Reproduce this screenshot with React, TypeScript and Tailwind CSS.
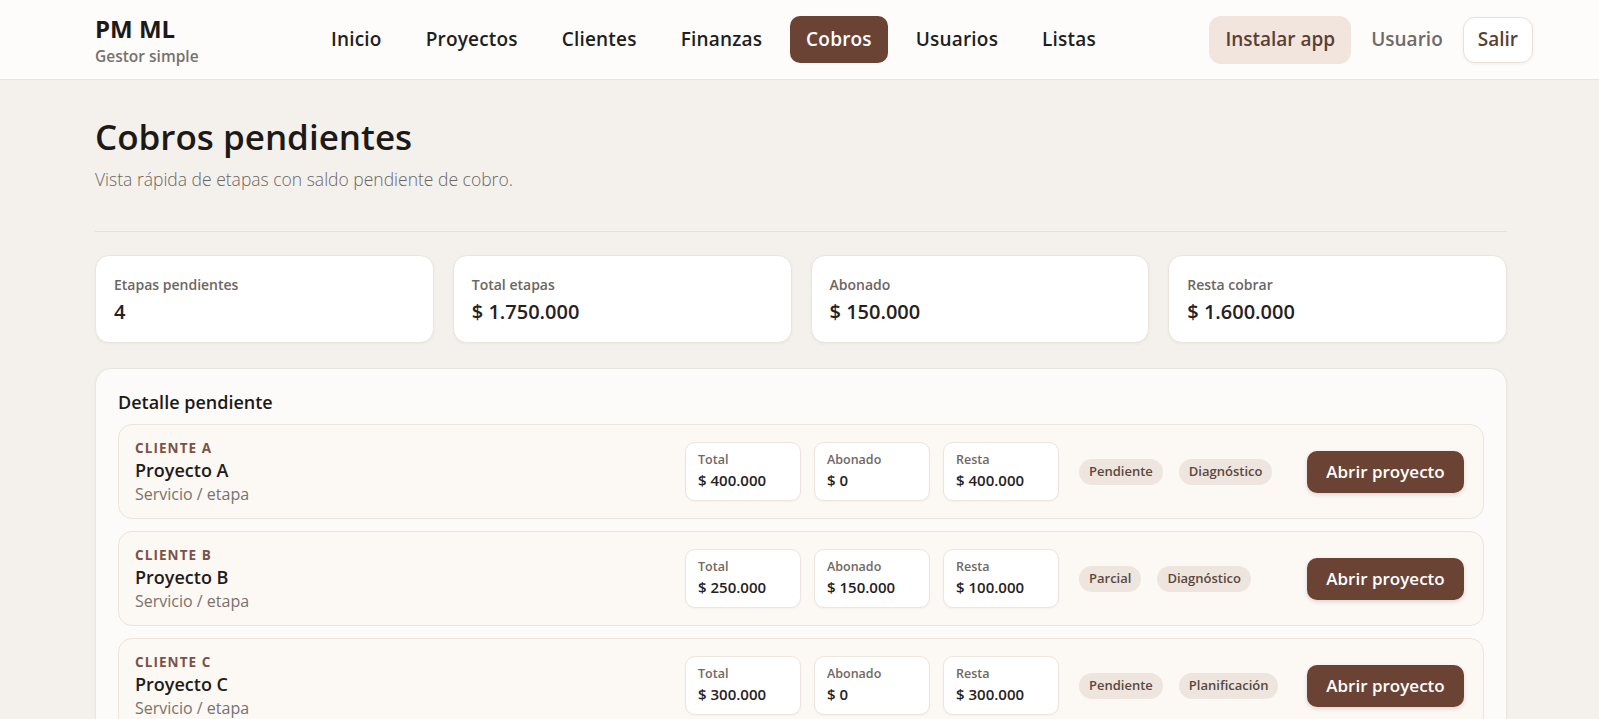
import React from 'react';

interface Stat {
  label: string;
  value: string;
}

interface Pending {
  client: string;
  project: string;
  total: string;
  paid: string;
  rest: string;
  status: string;
  stage: string;
}

const NAV_ITEMS = ['Inicio', 'Proyectos', 'Clientes', 'Finanzas', 'Cobros', 'Usuarios', 'Listas'];

const STATS: Stat[] = [
  { label: 'Etapas pendientes', value: '4' },
  { label: 'Total etapas', value: '$ 1.750.000' },
  { label: 'Abonado', value: '$ 150.000' },
  { label: 'Resta cobrar', value: '$ 1.600.000' },
];

const PENDING: Pending[] = [
  { client: 'Cliente A', project: 'Proyecto A', total: '$ 400.000', paid: '$ 0', rest: '$ 400.000', status: 'Pendiente', stage: 'Diagnóstico' },
  { client: 'Cliente B', project: 'Proyecto B', total: '$ 250.000', paid: '$ 150.000', rest: '$ 100.000', status: 'Parcial', stage: 'Diagnóstico' },
  { client: 'Cliente C', project: 'Proyecto C', total: '$ 300.000', paid: '$ 0', rest: '$ 300.000', status: 'Pendiente', stage: 'Planificación' },
];

function Amount({ label, value }: { label: string; value: string }) {
  return (
    <div className="w-[116px] h-[59px] rounded-[10px] border border-[#ece5df] bg-white px-3 pt-[8px] shadow-[0_1px_2px_rgba(60,40,30,0.04)]">
      <div className="text-[12.5px] font-semibold text-[#6f6863] leading-[18px]">{label}</div>
      <div className="text-[15px] font-semibold text-[#26211e] leading-[22px]">{value}</div>
    </div>
  );
}

function Badge({ text }: { text: string }) {
  return (
    <span className="inline-flex h-[26px] items-center rounded-full bg-[#eee5de] px-[10px] text-[13px] font-semibold text-[#5a4840]">
      {text}
    </span>
  );
}

function PendingRow({ item }: { item: Pending }) {
  return (
    <div className="flex h-[95px] items-center rounded-[14px] border border-[#ede4dc] bg-[#fcf8f4] pl-[16px] pr-[19px]">
      <div className="flex-1">
        <div className="text-[13.5px] font-bold uppercase tracking-[0.08em] text-[#7a5246] leading-[18px]">{item.client}</div>
        <div className="text-[18px] font-semibold text-[#1f1b18] leading-[26px]">{item.project}</div>
        <div className="text-[16px] text-[#79726d] leading-[22px]">Servicio / etapa</div>
      </div>
      <div className="flex gap-[13px]">
        <Amount label="Total" value={item.total} />
        <Amount label="Abonado" value={item.paid} />
        <Amount label="Resta" value={item.rest} />
      </div>
      <div className="flex w-[248px] items-center gap-4 pl-5">
        <Badge text={item.status} />
        <Badge text={item.stage} />
      </div>
      <button className="h-[42px] w-[157px] rounded-[10px] bg-[#6b4334] text-[17px] font-semibold text-white shadow-[0_2px_4px_rgba(60,30,20,0.15)]">
        Abrir proyecto
      </button>
    </div>
  );
}

export default function App() {
  return (
    <div className="min-h-screen bg-[#f4f1ed] text-[#1f1b18]" style={{ fontFamily: '"Open Sans", "Noto Sans", sans-serif' }}>
      {/* Header */}
      <header className="flex h-[80px] items-center border-b border-[#e9e4df] bg-[#fdfcfb] pl-[95px] pr-[66px]">
        <div className="w-[220px]">
          <div className="text-[24px] font-bold leading-[30px] text-[#1c1917]">PM ML</div>
          <div className="mt-[2px] text-[15.5px] font-semibold leading-[20px] text-[#77716c]">Gestor simple</div>
        </div>
        <nav className="flex items-center gap-3">
          {NAV_ITEMS.map((item) =>
            item === 'Cobros' ? (
              <span key={item} className="flex h-[47px] items-center rounded-[10px] bg-[#6b4334] px-4 text-[19px] font-semibold tracking-[0.01em] text-white">
                {item}
              </span>
            ) : (
              <span key={item} className="flex h-[47px] items-center px-4 text-[19px] font-semibold tracking-[0.01em] text-[#221e1b]">
                {item}
              </span>
            )
          )}
        </nav>
        <div className="ml-auto flex items-center gap-5">
          <button className="h-[48px] rounded-[12px] bg-[#f1e5dd] px-4 text-[19px] font-semibold text-[#5a3f35]">
            Instalar app
          </button>
          <span className="text-[19px] font-semibold text-[#6f6a66]">Usuario</span>
          <button className="h-[46px] rounded-[12px] border border-[#e8e1db] bg-white px-[14px] text-[19px] font-semibold text-[#5a3f35] shadow-[0_1px_3px_rgba(60,40,30,0.06)]">
            Salir
          </button>
        </div>
      </header>

      <main className="pl-[95px] pr-[92px]">
        {/* Title */}
        <div className="pt-[35px]">
          <h1 className="text-[35px] font-semibold leading-[44px] text-[#1c1917]">Cobros pendientes</h1>
          <p className="mt-[8px] text-[17.5px] font-light leading-[24px] text-[#6b655f]">
            Vista rápida de etapas con saldo pendiente de cobro.
          </p>
        </div>
        <div className="mt-[40px] border-t border-[#e5e0db]" />

        {/* Stats */}
        <div className="mt-[23px] grid grid-cols-4 gap-[19px]">
          {STATS.map((s) => (
            <div key={s.label} className="h-[88px] rounded-[14px] border border-[#ebe5df] bg-white px-[18px] pt-[19px] shadow-[0_1px_3px_rgba(60,40,30,0.05)]">
              <div className="text-[14px] font-semibold leading-[20px] text-[#6c6661]">{s.label}</div>
              <div className="mt-[4px] text-[20px] font-semibold leading-[26px] text-[#26211e]">{s.value}</div>
            </div>
          ))}
        </div>

        {/* Detail */}
        <section className="mt-[25px] rounded-[16px] border border-[#ebe5df] bg-[#fdfbf9] px-[22px] pb-[22px] pt-[20px] shadow-[0_1px_3px_rgba(60,40,30,0.05)]">
          <h2 className="text-[18px] font-semibold leading-[26px] text-[#1c1917]">Detalle pendiente</h2>
          <div className="mt-[9px] flex flex-col gap-[12px]">
            {PENDING.map((p) => (
              <PendingRow key={p.client} item={p} />
            ))}
          </div>
        </section>
      </main>
    </div>
  );
}
